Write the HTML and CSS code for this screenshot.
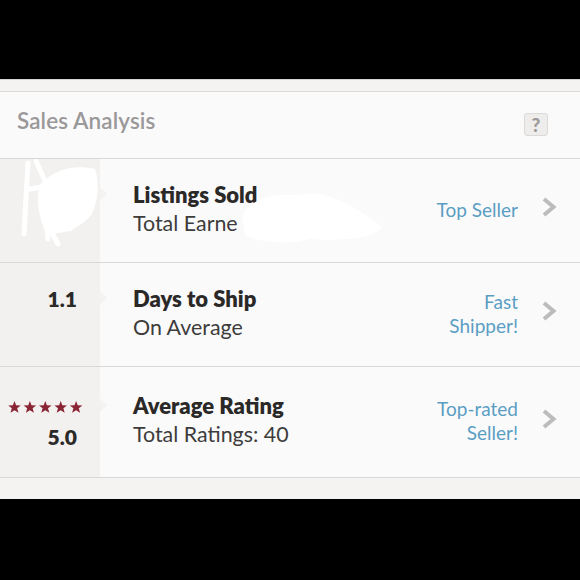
FILE: index.html
```html
<!DOCTYPE html>
<html>
<head>
<meta charset="utf-8">
<link rel="stylesheet" href="styles.css">
</head>
<body>
<div class="screen">
  <div class="panel">
    <div class="strip"></div>
    <div class="header">
      <h1 class="title">Sales Analysis</h1>
      <span class="help">?</span>
    </div>
    <div class="row">
      <div class="stat"></div>
      <div class="info">
        <div class="label">Listings Sold</div>
        <div class="sub">Total Earne</div>
      </div>
      <div class="badge">Top Seller</div>
      <svg class="chev" viewBox="0 0 16 20" width="16" height="20"><path d="M3 2 L12.5 10 L3 18" fill="none" stroke="#bdbcbc" stroke-width="4"/></svg>
      <svg class="redact" width="400" height="103" viewBox="0 0 400 103">
        <g fill="none" stroke="#fff" stroke-linecap="round" stroke-width="5">
          <path d="M28 4 L24 75"/>
          <path d="M36 2 L60 55"/>
          <path d="M30 30 L90 20"/>
          <path d="M50 70 L58 85"/>
          <path d="M80 40 L70 70"/>
          <path d="M45 40 L48 80"/>
        </g>
        <path fill="#fff" d="M40 25 C55 10 75 5 95 10 C100 25 98 40 92 55 C80 70 60 78 45 72 C38 55 36 40 40 25 Z"/>
        <path fill="#fff" d="M242 58 C250 40 270 34 300 36 C320 30 350 42 382 68 C375 80 340 82 310 80 C290 86 260 84 245 76 Z"/>
      </svg>
    </div>
    <div class="row">
      <div class="stat"><span class="num">1.1</span></div>
      <div class="info">
        <div class="label">Days to Ship</div>
        <div class="sub">On Average</div>
      </div>
      <div class="badge">Fast<br>Shipper!</div>
      <svg class="chev" viewBox="0 0 16 20" width="16" height="20"><path d="M3 2 L12.5 10 L3 18" fill="none" stroke="#bdbcbc" stroke-width="4"/></svg>
    </div>
    <div class="row row-tall">
      <div class="stat stat-rating">
        <svg class="stars" width="75" height="12" viewBox="0 0 75 12">
          <defs><path id="s" d="M6.5 0 L8.1 4.3 L12.8 4.5 L9.2 7.3 L10.5 11.8 L6.5 9.2 L2.5 11.8 L3.8 7.3 L0.2 4.5 L4.9 4.3 Z"/></defs>
          <g fill="#8a2535">
            <use href="#s" x="0"/><use href="#s" x="15.4"/><use href="#s" x="30.8"/><use href="#s" x="46.2"/><use href="#s" x="61.6"/>
          </g>
        </svg>
        <span class="num">5.0</span>
      </div>
      <div class="info">
        <div class="label">Average Rating</div>
        <div class="sub">Total Ratings: 40</div>
      </div>
      <div class="badge">Top-rated<br>Seller!</div>
      <svg class="chev" viewBox="0 0 16 20" width="16" height="20"><path d="M3 2 L12.5 10 L3 18" fill="none" stroke="#bdbcbc" stroke-width="4"/></svg>
    </div>
    <div class="footer"></div>
  </div>
</div>
</body>
</html>
```

FILE: styles.css
```css
html, body {
  margin: 0;
  padding: 0;
  background: #000;
}
body {
  font-family: Lato, "Liberation Sans", sans-serif;
  width: 580px;
  height: 580px;
  overflow: hidden;
}
.screen {
  padding-top: 79px;
}
.panel {
  background: #f4f3f1;
  border-top: 1px solid #d6d4d2;
}
.strip {
  height: 11px;
  border-bottom: 1px solid #dcdad8;
}
.header {
  height: 67px;
  background: #fbfafb;
  border-bottom: 1px solid #d9d8d8;
  display: flex;
  align-items: center;
  justify-content: space-between;
  padding: 0 32px 0 17px;
  box-sizing: border-box;
}
.title {
  margin: 0 0 10px 0;
  font-size: 22.5px;
  font-weight: 600;
  color: #9a9898;
  letter-spacing: 0.1px;
}
.help {
  width: 22px;
  height: 21px;
  border: 1px solid #dcdad8;
  border-radius: 3px;
  background: #eeedeb;
  color: #9d9b9a;
  font-weight: 900;
  font-size: 19px;
  display: flex;
  align-items: center;
  justify-content: center;
  margin-bottom: 2px;
}
.row {
  position: relative;
  height: 103px;
  background: #fbfafb;
  border-bottom: 1px solid #d9d8d8;
  display: flex;
  align-items: center;
}
.row-tall {
  height: 110px;
}
.stat {
  position: relative;
  align-self: stretch;
  width: 100px;
  flex: none;
  background: #f3f1ef;
  display: flex;
  flex-direction: column;
  align-items: flex-end;
  justify-content: center;
  padding-right: 23px;
  box-sizing: border-box;
}
.stat::after {
  content: "";
  position: absolute;
  right: -7px;
  top: 50%;
  margin-top: -24px;
  border-left: 7px solid #f5f3f1;
  border-top: 7px solid transparent;
  border-bottom: 7px solid transparent;
}
.stat-rating {
  padding-right: 18px;
}
.num {
  font-weight: 800;
  font-size: 21px;
  color: #2b2a29;
  margin-bottom: 33px;
}
.stat-rating .num {
  margin: 11px 5px 0 0;
}
.stars {
  display: block;
  margin-top: 6px;
  margin-right: -1px;
}
.info {
  margin-left: 33px;
  flex: 1;
  margin-top: -4px;
}
.label {
  font-size: 22px;
  font-weight: 800;
  color: #2a2928;
  line-height: 29px;
}
.sub {
  font-size: 21.4px;
  color: #3d3c3b;
  line-height: 29px;
}
.badge {
  text-align: right;
  color: #5a9ec3;
  font-size: 19px;
  line-height: 24px;
  margin-top: -2px;
}
.chev {
  margin: -7px 23px 0 23px;
  flex: none;
}
.redact {
  position: absolute;
  left: 0;
  top: 0;
}
.footer {
  height: 21px;
}
```
